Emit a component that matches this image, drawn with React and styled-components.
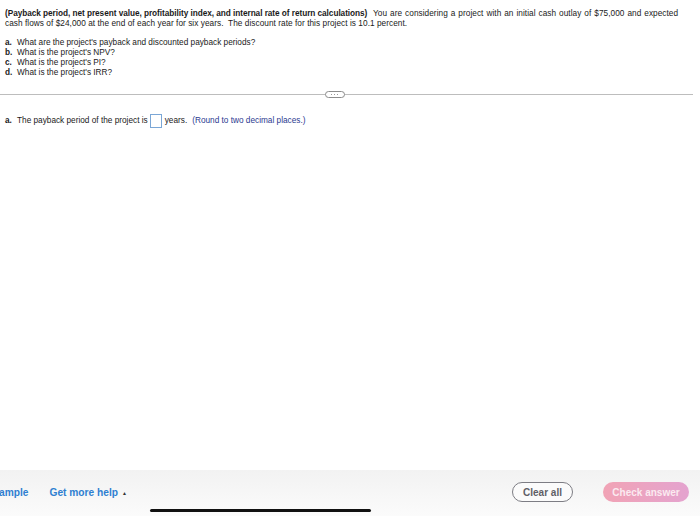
import React from 'react';
import styled, { createGlobalStyle } from 'styled-components';

const GlobalStyle = createGlobalStyle`
  html, body {
    margin: 0;
    padding: 0;
    background: #ffffff;
  }
  body {
    font-family: "Liberation Sans", Arial, sans-serif;
    color: #1a1a1a;
  }
`;

const Page = styled.div`
  position: relative;
  width: 700px;
  height: 516px;
  display: flex;
  flex-direction: column;
  overflow: hidden;
`;

const Content = styled.div`
  flex: 1;
  display: flex;
  flex-direction: column;
  padding-top: 9px;
`;

const Intro = styled.p`
  margin: 0;
  padding: 0 8px 0 5px;
  font-size: 8.25px;
  line-height: 10px;
  color: #1a1a1a;
`;

const Lead = styled.b`
  font-weight: 700;
  letter-spacing: -0.05px;
`;

const Stretch = styled.span`
  letter-spacing: 0.05px;
  word-spacing: ${(p) => p.$words}px;
`;

const QuestionList = styled.ul`
  list-style: none;
  margin: 9px 0 0;
  padding: 0 0 0 5px;
`;

const Question = styled.li`
  font-size: 8.25px;
  line-height: 10px;
`;

const Letter = styled.b`
  display: inline-block;
  width: 12px;
  font-weight: 700;
`;

const Divider = styled.div`
  position: relative;
  margin: 16px 7px 0 0;
  height: 1px;
  background: #bdbdbd;
  display: flex;
  justify-content: center;
`;

const Handle = styled.div`
  margin-top: -3px;
  margin-left: -24px;
  width: 18px;
  height: 5px;
  border: 1px solid #8c8c8c;
  border-radius: 4px;
  background: #fff;
  display: flex;
  align-items: center;
  justify-content: center;
  gap: 1.5px;
`;

const Dot = styled.span`
  width: 1.5px;
  height: 1.5px;
  border-radius: 50%;
  background: #7a7a7a;
`;

const AnswerRow = styled.div`
  margin: 19px 0 0;
  padding-left: 5px;
  display: flex;
  align-items: center;
  font-size: 8.25px;
  line-height: 14px;
`;

const AnswerBox = styled.span`
  display: inline-block;
  width: 10px;
  height: 12px;
  margin: 0 3px 0 2px;
  border: 1px solid #7ba7d6;
  background: #fff;
`;

const Hint = styled.span`
  margin-left: 5px;
  color: #2b3a8f;
`;

const Footer = styled.div`
  height: 46px;
  background: linear-gradient(#f2f2f2, #fbfbfb);
  display: flex;
  align-items: flex-start;
  padding-top: 12px;
  box-sizing: border-box;
`;

const FooterLinks = styled.div`
  display: flex;
  align-items: center;
  gap: 21px;
  height: 20px;
  margin-left: -1px;
`;

const Link = styled.span`
  color: #2f7fd1;
  font-weight: 700;
  font-size: 10.2px;
  display: flex;
  align-items: center;
  gap: 4px;
`;

const Caret = styled.span`
  font-size: 5px;
  color: #333;
  margin-top: 1px;
`;

const Actions = styled.div`
  margin-left: auto;
  margin-right: 11px;
  display: flex;
  gap: 30px;
`;

const Button = styled.button`
  height: 20px;
  width: ${(p) => p.$width}px;
  border-radius: 10px;
  font-family: "Liberation Sans", Arial, sans-serif;
  font-weight: 700;
  font-size: 10px;
  padding: 0;
  cursor: pointer;
  border: ${(p) => (p.$primary ? 'none' : '1.5px solid #7d7d84')};
  background: ${(p) => (p.$primary ? 'linear-gradient(90deg, #f1a3b5, #e4a3cf)' : '#fbfbfb')};
  color: ${(p) => (p.$primary ? '#fbeaf0' : '#5f5f66')};
`;

const HomeIndicator = styled.div`
  position: absolute;
  left: 150px;
  bottom: 4px;
  width: 221px;
  height: 3px;
  border-radius: 2px;
  background: #111;
`;

export default function App() {
  return (
    <Page>
      <GlobalStyle />
      <Content>
        <Intro>
          <Lead>(Payback period, net present value, profitability index, and internal rate of return calculations)</Lead>
          <Stretch $words={0.6}>
            {'\u00a0 You are considering a project with an initial cash outlay of $75,000 and expected'}
          </Stretch>
          <br />
          <Stretch $words={0}>
            {'cash flows of $24,000 at the end of each year for six years.\u00a0 The discount rate for this project is 10.1 percent.'}
          </Stretch>
        </Intro>
        <QuestionList>
          <Question><Letter>a.</Letter>What are the project's payback and discounted payback periods?</Question>
          <Question><Letter>b.</Letter>What is the project's NPV?</Question>
          <Question><Letter>c.</Letter>What is the project's PI?</Question>
          <Question><Letter>d.</Letter>What is the project's IRR?</Question>
        </QuestionList>
        <Divider>
          <Handle><Dot /><Dot /><Dot /></Handle>
        </Divider>
        <AnswerRow>
          <Letter>a.</Letter>
          The payback period of the project is
          <AnswerBox />
          years.
          <Hint>(Round to two decimal places.)</Hint>
        </AnswerRow>
      </Content>
      <Footer>
        <FooterLinks>
          <Link>ample</Link>
          <Link>Get more help <Caret>▲</Caret></Link>
        </FooterLinks>
        <Actions>
          <Button $width={61}>Clear all</Button>
          <Button $width={86} $primary>Check answer</Button>
        </Actions>
      </Footer>
      <HomeIndicator />
    </Page>
  );
}
